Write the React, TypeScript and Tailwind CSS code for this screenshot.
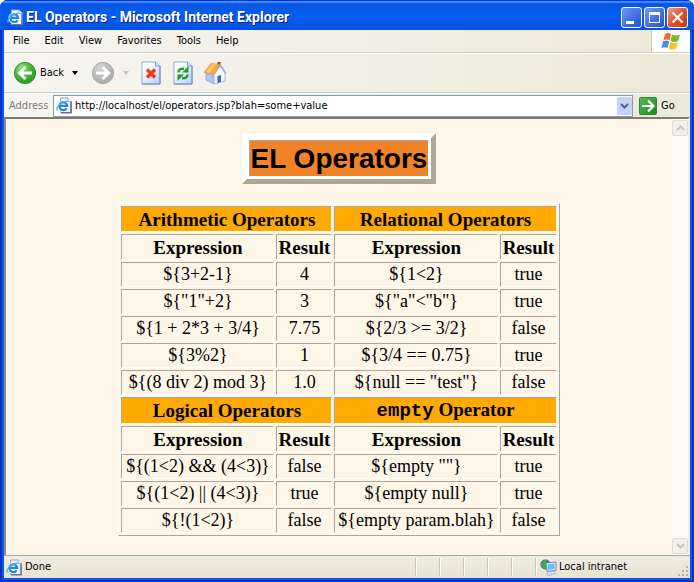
import React from "react";

type Row = [string, string, string, string];

const ARITHMETIC_AND_RELATIONAL: Row[] = [
  ["${3+2-1}", "4", "${1<2}", "true"],
  ['${"1"+2}', "3", '${"a"<"b"}', "true"],
  ["${1 + 2*3 + 3/4}", "7.75", "${2/3 >= 3/2}", "false"],
  ["${3%2}", "1", "${3/4 == 0.75}", "true"],
  ["${(8 div 2) mod 3}", "1.0", '${null == "test"}', "false"],
];

const LOGICAL_AND_EMPTY: Row[] = [
  ["${(1<2) && (4<3)}", "false", '${empty ""}', "true"],
  ["${(1<2) || (4<3)}", "true", "${empty null}", "true"],
  ["${!(1<2)}", "false", "${empty param.blah}", "false"],
];

const CELL = "border border-t-[#aca899] border-l-[#aca899] border-r-[#fffdf8] border-b-[#fffdf8] p-0";

function PageIcon() {
  return (
    <svg width="17" height="17" viewBox="0 0 17 17" className="shrink-0" aria-hidden="true">
      <path d="M4.500 1h7.500l3.500 3.500V15.500H4.500z" fill="#eef3ff" stroke="#8fa3d4" />
      <path d="M15 4.500v11.200H5" fill="none" stroke="#6a6ea6" strokeWidth="1.600" />
      <path d="M12 1v3.500h3.500" fill="#ffffff" stroke="#8f9cc4" strokeWidth="0.800" />
      <path d="M10.600 11.300A3.900 3.900 0 1 1 11.200 8.900H4.500" fill="none" stroke="#ffffff" strokeWidth="4" />
      <path d="M10.600 11.300A3.900 3.900 0 1 1 11.200 8.900H4.500" fill="none" stroke="#2089d6" strokeWidth="2.300" />
      <path d="M1.200 13.800C-0.500 10.500 6 3.500 12.300 4.300" fill="none" stroke="#4db2ea" strokeWidth="1.200" />
    </svg>
  );
}

function RoundArrow({ forward = false }: { forward?: boolean }) {
  return (
    <svg width="24" height="24" viewBox="0 0 24 24" className="shrink-0" aria-hidden="true">
      <defs>
        <radialGradient id={forward ? "fwd" : "back"} cx="0.35" cy="0.25" r="0.8">
          <stop offset="0" stopColor={forward ? "#d4d4d4" : "#8fe07f"} />
          <stop offset="0.5" stopColor={forward ? "#bdbdbd" : "#4cba3a"} />
          <stop offset="1" stopColor={forward ? "#a8a8a8" : "#239420"} />
        </radialGradient>
      </defs>
      <circle cx="12" cy="12" r="10.600" fill={forward ? "url(#fwd)" : "url(#back)"} stroke={forward ? "#a8a8a8" : "#2f8f2d"} />
      {forward ? (
        <path d="M5 12H17M11.500 6L17.500 12L11.500 18" fill="none" stroke="#fff" strokeWidth="3" />
      ) : (
        <path d="M19 12H7M12.500 6L6.500 12L12.500 18" fill="none" stroke="#fff" strokeWidth="3" />
      )}
    </svg>
  );
}

function Triangle({ color }: { color: string }) {
  return (
    <svg width="6" height="4" viewBox="0 0 6 4" className="shrink-0" aria-hidden="true">
      <path d="M0 0h6L3 4z" fill={color} />
    </svg>
  );
}

function Sheet({ children }: { children: React.ReactNode }) {
  return (
    <svg width="20" height="24" viewBox="0 0 20 24" aria-hidden="true">
      <defs>
        <linearGradient id="sheet" x1="0" y1="0" x2="1" y2="1">
          <stop offset="0.2" stopColor="#ffffff" />
          <stop offset="1" stopColor="#b4ccfa" />
        </linearGradient>
      </defs>
      <path d="M1 1h13.500L19 5v18H1z" fill="url(#sheet)" stroke="#94aadb" />
      <path d="M19 5v18H1" fill="none" stroke="#6f88c2" />
      <path d="M14.500 1v4H19" fill="#d4e2fb" stroke="#7e97d0" />
      {children}
    </svg>
  );
}

function HomeIcon() {
  return (
    <svg width="24" height="24" viewBox="0 0 24 24" aria-hidden="true">
      <path d="M14.500 1h3v6h-3z" fill="#b03a2c" />
      <path d="M3 12L11 15V23L3 19z" fill="#a9c5f2" stroke="#7f9bd0" strokeWidth="0.700" />
      <path d="M11 14L17 5L22 12V20L11 23z" fill="#f3f7ff" stroke="#8aa4d6" strokeWidth="0.700" />
      <path d="M14.500 15l3.500-1v7l-3.500 1z" fill="#4f68a8" />
      <path d="M1 11.500L8 2.500L17 3.500L11 13.500z" fill="#f9a840" stroke="#e08e34" strokeWidth="0.700" />
      <path d="M3 11L9.500 3L13 3.300L6 12z" fill="#fdc877" />
      <path d="M17 3.500L23 12.500" stroke="#9db4de" strokeWidth="1.600" />
    </svg>
  );
}

function WindowsFlag() {
  return (
    <svg width="20" height="19" viewBox="0 0 20 19" aria-hidden="true">
      <path d="M4 2Q7 0 10 2L8.500 8.500Q5.500 6.700 2.300 8.500z" fill="#ee6a35" />
      <path d="M11 2.500Q15 4.500 19 2.500L17.200 9Q13.500 11 9.500 9z" fill="#79b72d" />
      <path d="M2 9.500Q5 7.700 8.200 9.500L6.600 16Q3.500 14.300 0.300 16z" fill="#4c8de0" />
      <path d="M9.200 10Q13 12 17 10L15.200 16.500Q11.500 18.500 7.600 16.500z" fill="#fbc423" />
    </svg>
  );
}

function NetworkIcon() {
  return (
    <svg width="17" height="17" viewBox="0 0 17 17" className="shrink-0" aria-hidden="true">
      <circle cx="5.500" cy="5.500" r="5" fill="#1f62c4" />
      <path d="M2 3q3-3 6-2l-2 3 2 2-3 4-3-2-1-2z" fill="#3fb03a" />
      <path d="M6 4l10-1v8.500l-9 1z" fill="#dfe8f8" stroke="#7487b5" />
      <path d="M7.500 5.500l7-1v5.500l-6.500 1z" fill="#6cc0fa" />
      <path d="M8 13l5-1 2.500 2.500-7 2-2-1.500z" fill="#dbe3f4" stroke="#8493bb" strokeWidth="0.600" />
    </svg>
  );
}

function ScrollButton({ down = false }: { down?: boolean }) {
  return (
    <button
      type="button"
      aria-label={down ? "Scroll down" : "Scroll up"}
      className="flex h-4 w-4 items-center justify-center rounded-[2px] border border-[#dddccf] bg-[#f1f0e9]"
    >
      <svg width="9" height="6" viewBox="0 0 9 6" aria-hidden="true">
        <path d={down ? "M1 1L4.500 4.500L8 1" : "M1 5L4.500 1.500L8 5"} fill="none" stroke="#c5c3b8" strokeWidth="2" />
      </svg>
    </button>
  );
}

function SectionHeads({ left, right, height }: { left: React.ReactNode; right: React.ReactNode; height: string }) {
  return (
    <>
      <tr className={`${height} text-[19px]`}>
        <th colSpan={2} className={`bg-[#ffaa00] ${CELL}`}>{left}</th>
        <th colSpan={2} className={`bg-[#ffaa00] ${CELL}`}>{right}</th>
      </tr>
      <tr className="h-[26px] text-[19px]">
        <th className={CELL}>Expression</th>
        <th className={CELL}>Result</th>
        <th className={CELL}>Expression</th>
        <th className={CELL}>Result</th>
      </tr>
    </>
  );
}

function DataRows({ rows }: { rows: Row[] }) {
  return (
    <>
      {rows.map((row) => (
        <tr key={row[0]} className="h-[25px]">
          {row.map((text, i) => (
            <td key={i} className={CELL}>{text}</td>
          ))}
        </tr>
      ))}
    </>
  );
}

export default function App() {
  return (
    <div className="flex h-screen flex-col overflow-hidden rounded-t-lg bg-[#0a55ee] font-['DejaVu_Sans_Condensed','DejaVu_Sans',sans-serif] text-[11px] leading-[14px] text-black shadow-[inset_0_0_0_2px_#0831c4]">
      <header className="flex h-[30px] shrink-0 items-center bg-linear-to-b from-[#0a50d8] via-[#0560f2] to-[#0350e0] pt-1 pr-[6px] pl-[7px] shadow-[inset_0_1px_0_#0831d9,inset_0_3px_1px_#3a8cff]">
        <PageIcon />
        <h1 className="ml-[2px] grow font-[Roboto,'Open_Sans',sans-serif] text-[14px] font-bold whitespace-nowrap text-white [text-shadow:1px_1px_#0a1f80]">
          EL Operators - Microsoft Internet Explorer
        </h1>
        <div className="flex gap-[2px]">
          <button type="button" aria-label="Minimize" className="flex h-[21px] w-[21px] items-end rounded-[3px] border border-white bg-linear-to-br from-[#6f98f5] to-[#1f4fd0] pb-[3px] pl-1">
            <span className="h-[3px] w-[8px] bg-white" />
          </button>
          <button type="button" aria-label="Maximize" className="flex h-[21px] w-[21px] items-center justify-center rounded-[3px] border border-white bg-linear-to-br from-[#6f98f5] to-[#1f4fd0]">
            <span className="h-[11px] w-[11px] border border-t-[3px] border-white" />
          </button>
          <button type="button" aria-label="Close" className="flex h-[21px] w-[21px] items-center justify-center rounded-[3px] border border-white bg-linear-to-br from-[#f09a80] via-[#e2502c] to-[#c13a12]">
            <svg width="13" height="13" viewBox="0 0 13 13" aria-hidden="true">
              <path d="M1.500 1.500l10 10M11.500 1.500l-10 10" stroke="#fff" strokeWidth="2.200" />
            </svg>
          </button>
        </div>
      </header>

      <div className="mx-1 mb-1 flex min-h-0 grow flex-col bg-[#ece9d8]">
        <div className="flex h-[23px] shrink-0 border-b border-[#d0cdbd] bg-linear-to-r from-[#f6f5f1] to-[#ece9d8]">
          <nav className="flex grow items-center gap-[15px] pl-[9px]">
            {["File", "Edit", "View", "Favorites", "Tools", "Help"].map((name) => (
              <button key={name} type="button">{name}</button>
            ))}
          </nav>
          <div className="flex w-[39px] items-center justify-center border-l border-[#c9c6b6] bg-white">
            <WindowsFlag />
          </div>
        </div>

        <div className="flex h-[40px] shrink-0 items-center border-t border-b border-t-white border-b-[#d0cdbd] bg-linear-to-r from-[#f6f5f1] to-[#ece9d8] pl-[9px]">
          <button type="button" className="flex items-center gap-[3px]">
            <RoundArrow />
            Back
          </button>
          <button type="button" aria-label="Back history" className="ml-2"><Triangle color="#000" /></button>
          <button type="button" aria-label="Forward" className="ml-[13px]"><RoundArrow forward /></button>
          <button type="button" aria-label="Forward history" className="ml-2"><Triangle color="#c4c2b8" /></button>
          <button type="button" aria-label="Stop" className="ml-3">
            <Sheet>
              <path d="M6 8.500l8 8M14 8.500l-8 8" stroke="#f03a1c" strokeWidth="3.400" />
            </Sheet>
          </button>
          <button type="button" aria-label="Refresh" className="ml-3">
            <Sheet>
              <path d="M5.500 11.500Q5.500 7.500 11 7.800" fill="none" stroke="#1fa02a" strokeWidth="2.400" />
              <path d="M15.500 5V11.500H9z" fill="#1fa02a" />
              <path d="M14.500 13.500Q14.500 17.500 9 17.200" fill="none" stroke="#1fa02a" strokeWidth="2.400" />
              <path d="M4.500 20V13.500H11z" fill="#1fa02a" />
            </Sheet>
          </button>
          <button type="button" aria-label="Home" className="ml-[10px]"><HomeIcon /></button>
        </div>

        <form className="flex h-[24px] shrink-0 items-center border-t border-white bg-linear-to-r from-[#f6f5f1] to-[#ece9d8] pl-[5px]" onSubmit={(e) => e.preventDefault()}>
          <label htmlFor="address" className="w-[44px] text-[#7f7c73]">Address</label>
          <div className="flex h-[22px] grow items-center border border-[#7f9db9] bg-white pl-[2px]">
            <PageIcon />
            <input id="address" className="ml-[2px] min-w-0 grow outline-none" defaultValue="http://localhost/el/operators.jsp?blah=some+value" />
            <button type="button" aria-label="Show addresses" className="flex h-[18px] w-[15px] items-center justify-center rounded-[2px] bg-[#c3d3fd]">
              <svg width="9" height="6" viewBox="0 0 9 6" aria-hidden="true">
                <path d="M1 1L4.500 4.500L8 1" fill="none" stroke="#4d6185" strokeWidth="2" />
              </svg>
            </button>
          </div>
          <button type="submit" className="ml-[6px] flex w-[51px] items-center gap-1">
            <svg width="18" height="18" viewBox="0 0 18 18" aria-hidden="true">
              <defs>
                <linearGradient id="go" x1="0" y1="0" x2="1" y2="1">
                  <stop offset="0" stopColor="#5fb565" />
                  <stop offset="1" stopColor="#128a1c" />
                </linearGradient>
              </defs>
              <rect x="0.500" y="0.500" width="17" height="17" rx="1" fill="url(#go)" stroke="#2c8a36" />
              <path d="M3 9h11M9 3.500L14.500 9L9 14.500" fill="none" stroke="#fff" strokeWidth="2.200" />
            </svg>
            Go
          </button>
        </form>

        <div className="flex min-h-0 grow border-t-2 border-r-2 border-l-2 border-t-[#7d7a6e] border-r-[#f1efe2] border-l-[#8d8a7e] bg-[#fdf5e6]">
          <main className="flex grow flex-col items-center pt-[14px] font-['Liberation_Serif','Times_New_Roman',serif] text-[18px] leading-[21px]">
            <div className="border-[5px] border-t-white border-r-[#aca899] border-b-[#aca899] border-l-white bg-white">
              <div className="bg-white p-[2px]">
                <h2 className="border border-t-[#aca899] border-r-white border-b-white border-l-[#aca899] bg-[#f08228] px-px font-['Liberation_Sans',Arial,sans-serif] text-[28px] leading-[35px] font-bold whitespace-nowrap">
                  EL Operators
                </h2>
              </div>
            </div>
            <table className="mt-[19px] w-[441px] table-fixed border-separate border-spacing-[2px] border border-t-[#fffdf8] border-r-[#aca899] border-b-[#aca899] border-l-[#fffdf8] text-center whitespace-nowrap">
              <colgroup>
                <col className="w-[153px]" />
                <col className="w-[56px]" />
                <col className="w-[164px]" />
                <col className="w-[56px]" />
              </colgroup>
              <tbody>
                <SectionHeads left="Arithmetic Operators" right="Relational Operators" height="h-[26px]" />
                <DataRows rows={ARITHMETIC_AND_RELATIONAL} />
                <SectionHeads
                  left="Logical Operators"
                  right={<><code className="font-['Liberation_Mono','Courier_New',monospace]">empty</code> Operator</>}
                  height="h-[27px]"
                />
                <DataRows rows={LOGICAL_AND_EMPTY} />
              </tbody>
            </table>
          </main>
          <div className="flex w-[16px] shrink-0 flex-col justify-between bg-[#fefdf8] py-px">
            <ScrollButton />
            <ScrollButton down />
          </div>
        </div>

        <footer className="flex h-[23px] shrink-0 items-center border-t border-[#aca899] bg-linear-to-b from-[#f0eee1] to-[#e6e3d0] pl-[2px]">
          <PageIcon />
          <span className="ml-[2px] grow">Done</span>
          <div className="flex h-[18px]">
            {[0, 1, 2, 3, 4].map((n) => (
              <span key={n} className="w-6 border-l border-[#c9c6b4] shadow-[inset_1px_0_#fff]" />
            ))}
          </div>
          <div className="flex h-[18px] w-[142px] items-center gap-[2px] border-l border-[#c9c6b4] pl-1 shadow-[inset_1px_0_#fff]">
            <NetworkIcon />
            Local intranet
          </div>
          <svg width="13" height="13" viewBox="0 0 13 13" className="self-end" aria-hidden="true">
            <path d="M9 1h2v2h-2zM5 5h2v2h-2zM9 5h2v2h-2zM1 9h2v2h-2zM5 9h2v2h-2zM9 9h2v2h-2z" fill="#b5b29f" />
          </svg>
        </footer>
      </div>
    </div>
  );
}
